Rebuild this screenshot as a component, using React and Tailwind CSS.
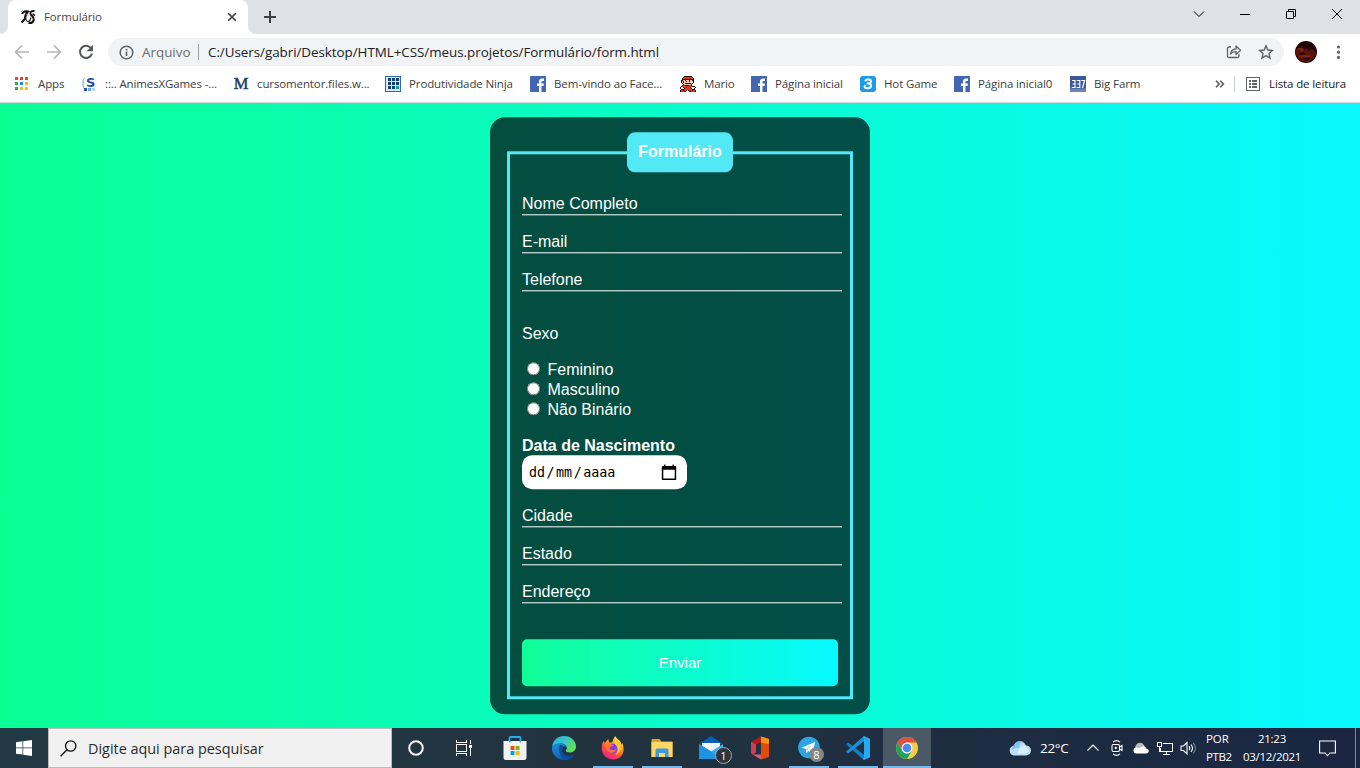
import React from "react";

const bookmarks = [
  { icon: "apps", label: "Apps", width: "w-[27px]" },
  { icon: "s", label: "::.. AnimesXGames -...", width: "w-[112px]" },
  { icon: "m", label: "cursomentor.files.w...", width: "w-[112px]" },
  { icon: "ninja", label: "Produtividade Ninja", width: "w-[105px]" },
  { icon: "fb", label: "Bem-vindo ao Face...", width: "w-[110px]" },
  { icon: "mario", label: "Mario", width: "w-[31px]" },
  { icon: "fb", label: "Página inicial", width: "w-[69px]" },
  { icon: "hot", label: "Hot Game", width: "w-[54px]" },
  { icon: "fb", label: "Página inicial0", width: "w-[76px]" },
  { icon: "farm", label: "Big Farm", width: "w-[50px]" },
];

const marioRows = [
  "....KKKKKKKK....",
  "...KRRRRRRRRK...",
  "..KRRRRRRRRRRK..",
  "..KKKKKKKKKKKK..",
  ".KKPPKPPPKPPKK..",
  ".KPKPPKPPKPPPK..",
  ".KPKPPPPPPPPPK..",
  "..KPPKKKKKKPK...",
  "...KPPPPPPPK....",
  "..KRRKKKKRRK....",
  ".KRRRRRRRRRRKKK.",
  "KWWKRRKRRRKPWWWK",
  "KWWPKRRRRRRKWWK.",
  ".KKKRRRRRRRRKKK.",
  "KRRKRRK.KRRRKRRK",
  "KRRRKK...KKRRRRK",
];
const marioColors = { K: "#1c0d0a", R: "#e33a16", P: "#f4cfb4", W: "#ffffff" };

function BookmarkIcon({ kind }) {
  const cls = "h-4 w-4 shrink-0";
  if (kind === "apps") {
    const c = ["#ea4335", "#ea4335", "#ea4335", "#34a853", "#1a8cf0", "#fbbc04", "#34a853", "#fbbc04", "#fbbc04"];
    return (
      <svg className={cls} viewBox="0 0 16 16" shapeRendering="crispEdges">
        {c.map((f, i) => (
          <rect key={i} x={1 + (i % 3) * 5} y={1 + Math.floor(i / 3) * 5} width="3" height="3" fill={f} />
        ))}
      </svg>
    );
  }
  if (kind === "s")
    return (
      <svg className={cls} viewBox="0 0 16 16">
        <path d="M4 .5C.6 3.5.3 10 3.5 14 2.4 9 2.5 5 4 .5z" fill="#7cc4ee" />
        <text x="5" y="10.7" fontFamily="DejaVu Sans" fontSize="13" fontWeight="bold" fill="#1750b8">S</text>
        <rect x="3" y="12" width="3" height="3" fill="#2456b0" />
        <rect x="7" y="12" width="3" height="3" fill="#6fa6e0" />
        <rect x="11" y="12" width="3" height="3" fill="#b5d3f2" />
      </svg>
    );
  if (kind === "m")
    return (
      <svg className={cls + " overflow-visible"} viewBox="0 0 16 16">
        <text x="0.8" y="13.4" fontFamily="Liberation Serif" fontSize="16.500" fill="#24405f" stroke="#24405f" strokeWidth=".5">M</text>
      </svg>
    );
  if (kind === "ninja")
    return (
      <svg className={cls} viewBox="0 0 16 16" shapeRendering="crispEdges">
        <rect width="16" height="16" fill="#2e64b0" />
        <rect x="1" y="1" width="14" height="14" fill="#dbe8f5" />
        {Array.from({ length: 9 }, (_, i) => (
          <rect key={i} x={3 + (i % 3) * 4} y={2 + Math.floor(i / 3) * 4} width="3" height="3" fill={i === 8 ? "#1595a5" : "#123f74"} />
        ))}
      </svg>
    );
  if (kind === "fb")
    return (
      <svg className={cls} viewBox="0 0 16 16">
        <rect width="16" height="16" rx="0.5" fill="#4267b2" />
        <path d="M9 16V10H7V7.5h2V5.8C9 3.7 10.2 2.6 12.1 2.6c.9 0 1.7.1 1.9.1V5h-1.3c-1 0-1.2.5-1.2 1.2v1.3h2.4L13.6 10h-2.1v6z" fill="#fff" />
      </svg>
    );
  if (kind === "mario")
    return (
      <svg className={cls} viewBox="0 0 16 16" shapeRendering="crispEdges">
        {marioRows.flatMap((row, y) =>
          [...row].map((p, x) => (p === "." ? null : <rect key={x + "-" + y} x={x} y={y} width="1" height="1" fill={marioColors[p]} />))
        )}
      </svg>
    );
  if (kind === "hot")
    return (
      <svg className={cls} viewBox="0 0 16 16">
        <rect width="16" height="16" rx="3" fill="#1b9ce5" />
        <path d="M5.500 4.500C7 3 11 3 11 5.300 11 7 9.500 7.600 7.500 7.600M8 7.600c4.500 0 3.700 4.700-.5 4.700-3 0-3.500-1.600-2.500-2.600" fill="none" stroke="#fff" strokeWidth="2" strokeLinecap="round" />
      </svg>
    );
  return (
    <svg className={cls} viewBox="0 0 16 16">
      <rect width="16" height="16" fill="#3b5998" />
      <rect y="12.500" width="16" height="3.500" fill="#6d84b4" />
      <path d="M2 4.500h3v7H1.800M2.500 8H5M6.800 4.500h3v7H6.600M7.300 8h2.500M11.300 4.500h3.200l-2 7.500" fill="none" stroke="#fff" strokeWidth="1.200" />
    </svg>
  );
}

function TabStrip() {
  return (
    <div className="flex h-[34px] bg-[#dee1e6]">
      <div className="flex w-2 items-end bg-white">
        <div className="h-full w-2 rounded-br-lg bg-[#dee1e6]" />
      </div>
      <div className="bg-[#dee1e6]">
        <div className="flex h-[34px] w-[240px] items-center rounded-t-lg bg-white pl-3">
          <svg className="h-4 w-4" viewBox="0 0 16 16">
            <path d="M2 5C3 2.500 6 1.800 8 2.500 5.500 4.500 5 7.500 4.800 10L1.500 13.500" fill="none" stroke="#111" strokeWidth="2" />
            <path d="M8 3C5 6.500 5 11 7.500 12.500c2 .5 3-2 3.500-4" fill="none" stroke="#222" strokeWidth="1.200" />
            <path d="M14.500 2c-2.500-.5-4.500 1-4 3 .7 2 3.800 3 3.300 5.500S11.500 14.500 8.500 14" fill="none" stroke="#111" strokeWidth="2" />
            <path d="M6.500 5l2 2" stroke="#e99" strokeWidth="1" />
            <path d="M12.500 5l2.500 1.500" stroke="#222" strokeWidth="1.500" />
            <path d="M1 3l2-2" stroke="#8cc3a0" />
          </svg>
          <span className="ml-2 w-[183px] text-[11.5px] tracking-[-0.12px] text-[#45494d]">Formulário</span>
          <svg className="h-2.5 w-2.5" viewBox="0 0 10 10" fill="none" stroke="#3c4043" strokeWidth="1.600">
            <path d="M1.200 1.200l7.600 7.600M8.800 1.200L1.200 8.800" />
          </svg>
        </div>
      </div>
      <div className="w-2 bg-white">
        <div className="h-full w-2 rounded-bl-lg bg-[#dee1e6]" />
      </div>
      <svg className="mt-[11px] ml-2 h-3 w-3" viewBox="0 0 12 12" shapeRendering="crispEdges">
        <path d="M0 5h12v2H0zM5 0h2v12H5z" fill="#3c4043" />
      </svg>
      <div className="ml-auto flex items-start pt-[9px] text-black">
        <svg className="mr-[34px] h-3 w-3" viewBox="0 0 12 12" fill="none" stroke="currentColor" strokeWidth="1">
          <path d="M1 2.500l5 5 5-5" />
        </svg>
        <svg className="mr-[34px] h-3 w-3" viewBox="0 0 12 12" shapeRendering="crispEdges">
          <rect x="1" y="5" width="10" height="1" fill="currentColor" />
        </svg>
        <svg className="mr-[34px] h-3 w-3" viewBox="0 0 12 12" fill="none" stroke="currentColor" strokeWidth="1">
          <path d="M1.500 2.500h7v7h-7zM3.500 2.500v-2h7v7h-2" />
        </svg>
        <svg className="mr-[17px] h-3 w-3" viewBox="0 0 12 12" fill="none" stroke="currentColor" strokeWidth="1">
          <path d="M1 0l10 10M11 0L1 10" />
        </svg>
      </div>
    </div>
  );
}

function Toolbar() {
  return (
    <div className="flex h-8 items-end bg-white">
      <div className="flex h-7 w-[108px] items-center pl-[14px]">
        <svg className="h-4 w-4" viewBox="0 0 16 16" fill="none" stroke="#b4b6b9" strokeWidth="1.700">
          <path d="M15 8H2M8 1.500L1.500 8 8 14.500" />
        </svg>
        <svg className="ml-4 h-4 w-4" viewBox="0 0 16 16" fill="none" stroke="#b4b6b9" strokeWidth="1.700">
          <path d="M1 8h13M8 1.500L14.500 8 8 14.500" />
        </svg>
        <svg className="ml-4 h-4 w-4" viewBox="0 0 16 16">
          <path d="M13.200 4.500A6.100 6.100 0 1 0 14 9.500" fill="none" stroke="#55595e" strokeWidth="2" />
          <path d="M15 .8v6.400H8.600z" fill="#55595e" />
        </svg>
      </div>
      <div className="flex h-7 w-[1176px] items-center rounded-full bg-[#f1f3f4] pl-[11px] text-[13.400px]">
        <svg className="h-[15px] w-[15px]" viewBox="0 0 15 15">
          <circle cx="7.500" cy="7.500" r="6.300" fill="none" stroke="#5f6368" strokeWidth="1.500" />
          <path d="M6.700 6.600h1.600v4.400H6.700zM6.700 4h1.600v1.600H6.700z" fill="#5f6368" />
        </svg>
        <span className="ml-2 w-[48px] whitespace-nowrap text-[#6a6e73]">Arquivo</span>
        <span className="ml-2 h-4 w-px bg-[#9a9da1]" />
        <span className="ml-[9px] whitespace-nowrap tracking-[-0.040px] text-[#202124]">C:/Users/gabri/Desktop/HTML+CSS/meus.projetos/Formulário/form.html</span>
        <svg className="mr-4 ml-auto h-4 w-4" viewBox="0 0 16 16" fill="none" stroke="#5f6368" strokeWidth="1.300">
          <path d="M5 3H3a1.500 1.500 0 0 0-1.500 1.500v7.500A1.500 1.500 0 0 0 3 13.500h8.500A1.500 1.500 0 0 0 13 12v-2" />
          <path d="M4.500 10c.4-3 2-4.800 5.500-5V2l4.500 4.300L10 10.500V7.700C7.500 7.600 6 8.300 4.500 10z" strokeLinejoin="round" />
        </svg>
        <svg className="mr-[10px] h-4 w-4" viewBox="0 0 16 16" fill="none" stroke="#5f6368" strokeWidth="1.400">
          <path d="M8 1.900l1.850 4.150 4.550.45-3.400 3 1 4.500L8 11.650 4 14l1-4.500-3.400-3 4.550-.45z" />
        </svg>
      </div>
      <div className="flex h-7 flex-1 items-center pl-[11px]">
        <svg className="h-[22px] w-[22px]" viewBox="0 0 22 22">
          <circle cx="11" cy="11" r="11" fill="#200605" />
          <path d="M1 8.500C4 5 8 9 11 8s7 1 9 2l1 3c-2 5-6 8-10 8S2 17 1 13z" fill="#5a1409" />
          <path d="M3 8l3-2 3 2-2 3zM3 15l7-1 8 1-4 1H6z" fill="#822210" />
          <path d="M4 12l5-1 2 2-5 1zM13 8l3 1-3 1zM8 17h7l-3 3z" fill="#210605" />
        </svg>
        <svg className="ml-[14px] h-4 w-4" viewBox="0 0 16 16" fill="#5f6368">
          <circle cx="7.500" cy="3" r="1.600" /><circle cx="7.500" cy="8.200" r="1.600" /><circle cx="7.500" cy="13.400" r="1.600" />
        </svg>
      </div>
    </div>
  );
}

function BookmarksBar() {
  return (
    <div className="flex h-[37px] items-center border-b border-[#d5d8dc] bg-white pl-[14px] text-[11.500px] tracking-[-0.120px] text-[#3c4043]">
      <div className="flex items-center gap-4">
        {bookmarks.map((b) => (
          <div key={b.label} className="flex items-center gap-2">
            <BookmarkIcon kind={b.icon} />
            <span className={b.width + " whitespace-nowrap"}>{b.label}</span>
          </div>
        ))}
      </div>
      <div className="ml-auto flex items-center">
        <svg className="h-2 w-2.5" viewBox="0 0 10 8" fill="none" stroke="#55595e" strokeWidth="1.600">
          <path d="M1 .8L4.200 4 1 7.200M5.200 .8L8.400 4 5.200 7.200" />
        </svg>
        <span className="ml-[9px] h-4 w-px bg-[#cdd0d4]" />
        <svg className="ml-[11px] h-[14px] w-[14px]" viewBox="0 0 14 14" shapeRendering="crispEdges" fill="#5f6368">
          <path fillRule="evenodd" d="M0 0h14v14H0zM1 1v12h12V1z" />
          <path d="M3 3h2v2H3zM6 3h5v2H6zM3 6h2v2H3zM6 6h5v2H6zM3 9h2v2H3zM6 9h5v2H6z" />
        </svg>
        <span className="ml-[9px] w-[91px] whitespace-nowrap text-[#202124]">Lista de leitura</span>
      </div>
    </div>
  );
}

function Field({ label, className = "" }) {
  return (
    <div className={"h-[21px] w-[320px] border-b border-white leading-5 " + className}>
      <label className="block">{label}</label>
    </div>
  );
}

function FormPage() {
  return (
    <main className="flex h-[625px] items-center justify-center bg-[linear-gradient(90deg,#0aff95,#08f8ff)] [font-family:'Liberation_Sans',Arial,sans-serif]">
      <form className="h-[597px] w-[380px] translate-y-[0.300px] rounded-[15px] bg-[#02040a]/70 px-[17px] py-[15px] text-[16px] text-white">
        <fieldset className="h-[567px] w-[346px] min-w-0 border-[3px] border-[#52e8f6] px-3">
          <legend className="mx-auto h-10 w-[106px] rounded-lg bg-[#52e8f6] text-center leading-[39px] font-bold">Formulário</legend>
          <Field label="Nome Completo" className="mt-[22px]" />
          <Field label="E-mail" className="mt-[17px]" />
          <Field label="Telefone" className="mt-[17px]" />
          <p className="mt-[33px] h-[18px] leading-5">Sexo</p>
          <div className="mt-[17px]">
            {["Feminino", "Masculino", "Não Binário"].map((s) => (
              <label key={s} className="flex h-5 items-start leading-[22px]">
                <input type="radio" name="sexo" className="mt-[3px] mr-[7.500px] mb-0 ml-[5px] h-[13px] w-[13px]" />
                {s}
              </label>
            ))}
          </div>
          <p className="mt-[17px] h-[18px] leading-5 font-bold">Data de Nascimento</p>
          <div className="mt-px flex h-[34px] w-[165px] items-center rounded-[10px] bg-white pr-[9px] pl-[7px] text-[13.333px] text-black [font-family:'DejaVu_Sans_Mono',monospace]">
            <span className="pt-0.5">dd</span>
            <span className="mx-[1.500px] pt-0.5">/</span>
            <span className="pt-0.5">mm</span>
            <span className="mx-[1.500px] pt-0.5">/</span>
            <span className="pt-0.5">aaaa</span>
            <svg className="ml-auto h-[17px] w-[17px]" viewBox="0 0 17 17">
              <path fillRule="evenodd" d="M2 1.800H3V.300h1.500V1.800h7V.300H13V1.800h1a1.200 1.200 0 0 1 1.200 1.200v11.600a1.200 1.200 0 0 1-1.200 1.200h-12A1.200 1.200 0 0 1 .8 14.600V3A1.200 1.200 0 0 1 2 1.800zM2.300 5.500v8.800h11.400V5.500z" fill="#000" />
            </svg>
          </div>
          <Field label="Cidade" className="mt-[17px]" />
          <Field label="Estado" className="mt-[17px]" />
          <Field label="Endereço" className="mt-[17px]" />
          <button type="button" className="mt-9 block h-[47px] w-[316px] rounded-[5px] bg-[linear-gradient(90deg,#11ff98,#06f9ff)] pt-0.5 text-[15px]">Enviar</button>
        </fieldset>
      </form>
    </main>
  );
}

function StoreIcon() {
  return (
    <svg className="h-6 w-6" viewBox="0 0 24 24">
      <path d="M6.500 6V2.200c0-.7.5-1.200 1.200-1.200h8.600c.7 0 1.200.5 1.200 1.200V6" fill="none" stroke="#27aee8" strokeWidth="1.800" />
      <path d="M.5 5h23v16.500A2.500 2.500 0 0 1 21 24H3a2.500 2.500 0 0 1-2.500-2.500z" fill="#f2f2f2" />
      <path d="M6 5h1.500v1.500H6zM16.500 5H18v1.500h-1.500z" fill="#27aee8" />
      <path d="M7.500 10h4v4h-4z" fill="#f25022" /><path d="M12.500 10h4v4h-4z" fill="#7fba00" />
      <path d="M7.500 15h4v4h-4z" fill="#00a4ef" /><path d="M12.500 15h4v4h-4z" fill="#ffb900" />
    </svg>
  );
}

function EdgeIcon() {
  return (
    <svg className="h-6 w-6" viewBox="0 0 24 24">
      <defs>
        <linearGradient id="edgeTop" x1="0" y1="0" x2="1" y2=".5"><stop offset="0" stopColor="#2aa9e4" /><stop offset=".5" stopColor="#31c5cf" /><stop offset="1" stopColor="#66dd57" /></linearGradient>
        <linearGradient id="edgeLow" x1="0" y1="0" x2=".6" y2="1"><stop offset="0" stopColor="#1b8fdf" /><stop offset="1" stopColor="#1059a9" /></linearGradient>
      </defs>
      <path d="M0 11C.8 4.500 5.500 0 12 0c7 0 12 5 12 10.500 0 3.500-2.500 6-6 6-2.500 0-4.200-.8-4.200-1.700 0-.6 1-1 1-2.800C14.800 9.500 12 7.500 8.500 7.500 5 7.500 2 9 0 11z" fill="url(#edgeTop)" />
      <path d="M0 12C1 8.500 5 7.400 8.500 7.500c3 0 5.300 1.500 6 3.500-1-.8-5.500-1-6 3-.5 5 4 8.500 8.500 7 2-.5 4-1.800 5-2.500C20 22.500 16 24 12 24 5 24-.2 18 0 12z" fill="url(#edgeLow)" />
      <path d="M8.500 8.500C6 12 6.500 20 13 23.900 18 24 21 21 22.500 18.200 17 21.500 10.500 19.500 10.300 14c0-1.500.7-2.800 1.700-3.500z" fill="#0d4f9c" />
    </svg>
  );
}

function FirefoxIcon() {
  return (
    <svg className="h-6 w-6" viewBox="0 0 24 24">
      <defs>
        <linearGradient id="fox" x1=".8" y1="0" x2=".25" y2="1"><stop offset="0" stopColor="#fff44f" /><stop offset=".35" stopColor="#ffa71e" /><stop offset=".65" stopColor="#ff4a3d" /><stop offset="1" stopColor="#e8209a" /></linearGradient>
      </defs>
      <path d="M2.500 5c.5 1 .8 1.300 1.500 1.800C5 6 5.500 4 7.500 3.200L8 6.500h3c1-1.500 1-4 3.500-6.500.5 3 5.500 4 6 8.500l.8-1.500C24.500 14 22 23.500 12.500 23.500 5 23.500.8 18 .8 12.500.8 9.500 1.200 7 2.500 5z" fill="url(#fox)" />
      <circle cx="12" cy="12.500" r="5" fill="#8a3be0" />
      <path d="M3.500 8.500c3-2 6.500-1 9 .8-1.500 1.200-3.500 1-4 3 .8 2.500 5 2.500 6.500.5-.3 5-7.500 5-9.500 1-1-1.800-.8-4-2-5.300z" fill="#ff7139" />
      <path d="M14 2c0 4 6 5 5.500 11-.3 3-2 5-5 6 2.500-3 2.800-7 .5-9.500C13 7 12 5 14 2z" fill="#ffc838" />
    </svg>
  );
}

function FolderIcon() {
  return (
    <svg className="h-6 w-6" viewBox="0 0 24 24">
      <path d="M1.500 3h8l2 2.500h11V21h-21z" fill="#e2a419" />
      <path d="M1.500 6h21v15h-21z" fill="#ffd768" />
      <path d="M5.500 21v-7A1.500 1.500 0 0 1 7 12.500h10a1.500 1.500 0 0 1 1.500 1.500v7H15v-4H9v4z" fill="#3f97dc" />
    </svg>
  );
}

function Badge({ children, className }) {
  return <span className={"absolute flex items-center justify-center rounded-full text-[11px] leading-none text-white " + className}>{children}</span>;
}

function MailIcon() {
  return (
    <span className="relative flex">
      <svg className="h-6 w-6" viewBox="0 0 24 24">
        <path d="M0 8l12-8 12 8z" fill="#0a60b8" />
        <path d="M3 7h18v12H3z" fill="#f3f6f9" />
        <path d="M0 8l13 8-13 7z" fill="#1683d8" /><path d="M24 8v15H0l12-7.500z" fill="#2bb3f0" /><path d="M0 8l12 7.500L24 23H0z" fill="#1f93e2" />
      </svg>
      <Badge className="-right-[9px] -bottom-[4px] h-[17px] w-[17px] border border-[#a5aaae] bg-[#2d343a]">1</Badge>
    </span>
  );
}

function OfficeIcon() {
  return (
    <svg className="h-6 w-6" viewBox="0 0 24 24">
      <path d="M3 6l10-5.500v6L8 8.500v8L4.500 18.500 3 17z" fill="#b01d18" />
      <path d="M3 6l5 2.500v8L4.500 18.500 3 17z" fill="#d43b55" />
      <path d="M13 .5L21 3v18l-8 2.500z" fill="#e24a0c" /><path d="M13 .5L21 3v5l-8-1.500z" fill="#f6930e" />
      <path d="M4.500 18.500H13v5z" fill="#dc6070" />
    </svg>
  );
}

function TelegramIcon() {
  return (
    <span className="relative flex">
      <svg className="h-6 w-6" viewBox="0 0 24 24">
        <circle cx="12" cy="11.500" r="10.800" fill="#2ca5e0" />
        <path d="M4.500 11.700L18 6l-2.500 12-4-3-2 2-.8-4.300z" fill="#fff" /><path d="M9 12.700l6.500-4.200-4.500 5-.8 2.600z" fill="#b9d6e8" />
      </svg>
      <Badge className="-right-[3px] -bottom-[2px] h-[15px] w-[15px] bg-[#858585]">8</Badge>
    </span>
  );
}

function CodeIcon() {
  return (
    <svg className="h-6 w-6" viewBox="0 0 24 24">
      <path d="M0 8.300L2 6.500l16 12.300V24z" fill="#1180c9" /><path d="M0 15.700l2 1.800L18 5.200V0z" fill="#1691dc" />
      <path d="M18 0l6 2.800v18.400L18 24l-1.500-1 1.500-1V2l-1.500-1z" fill="#28a8ef" />
    </svg>
  );
}

function ChromeIcon() {
  return (
    <svg className="h-6 w-6" viewBox="0 0 24 24">
      <circle cx="12" cy="12" r="11" fill="#f7cb45" />
      <path d="M2.500 6.500A11 11 0 0 1 21.500 6.500H12L7.200 14.750z" fill="#dd5144" />
      <path d="M2.500 6.500A11 11 0 0 0 12 23l4.760-8.250H7.200z" fill="#1da462" />
      <circle cx="12" cy="12" r="5.500" fill="#fff" /><circle cx="12" cy="12" r="4.300" fill="#4a8af4" />
    </svg>
  );
}

const apps = [
  { id: "store", Icon: StoreIcon },
  { id: "edge", Icon: EdgeIcon },
  { id: "firefox", Icon: FirefoxIcon, open: true },
  { id: "folder", Icon: FolderIcon, open: true },
  { id: "mail", Icon: MailIcon },
  { id: "office", Icon: OfficeIcon },
  { id: "telegram", Icon: TelegramIcon, open: true },
  { id: "code", Icon: CodeIcon, open: true },
  { id: "chrome", Icon: ChromeIcon, active: true },
];

function Taskbar() {
  return (
    <footer className="flex h-10 bg-gradient-to-r from-[#213a43] via-[#21323f] to-[#1a2642] text-white">
      <div className="flex w-12 items-center justify-center">
        <svg className="h-4 w-4" viewBox="0 0 16 16" fill="#fff">
          <path d="M0 2.200l6.500-.9v6.200H0zM7.200 1.200L16 0v7.500H7.200zM0 8.300h6.500v6.200L0 13.700zM7.200 8.300H16V16l-8.800-1.200z" />
        </svg>
      </div>
      <div className="flex w-[344px] items-center border border-[#bcbcbc] bg-[#f0f0f0] pl-[11px]">
        <svg className="h-[17px] w-[17px]" viewBox="0 0 17 17" fill="none" stroke="#111" strokeWidth="1.300">
          <circle cx="10.700" cy="6" r="5.200" /><path d="M7 9.800L.6 16.200" />
        </svg>
        <span className="ml-[11px] pt-px text-[14.400px] tracking-[0px] text-[#2b2b2b]">Digite aqui para pesquisar</span>
      </div>
      <div className="flex w-12 items-center justify-center">
        <svg className="h-4 w-4" viewBox="0 0 16 16"><circle cx="8" cy="8" r="6.800" fill="none" stroke="#f4f4f4" strokeWidth="2" /></svg>
      </div>
      <div className="mr-[3px] flex w-12 items-center justify-center">
        <svg className="h-4 w-4" viewBox="0 0 16 16" fill="none" stroke="#fff" strokeWidth="1" shapeRendering="crispEdges">
          <path d="M.5 0v2.500h10V0M.5 16v-2.500h10V16M.5 4.500h10v7H.5zM14.500 0v4M14.500 8v8" /><path d="M13 4.500h3v3h-3z" fill="#fff" stroke="none" />
        </svg>
      </div>
      <div className="flex gap-px">
        {apps.map(({ id, Icon, open, active }) => (
          <div key={id} className={"flex w-12 flex-col items-center " + (active ? "bg-[#4b5966]" : "")}>
            <div className="flex h-[38px] items-center pt-0.5"><Icon /></div>
            <div className={"h-0.5 " + (active ? "w-12 bg-[#76b9ed]" : open ? "w-10 bg-[#76b9ed]" : "w-10")} />
          </div>
        ))}
      </div>
      <div className="ml-auto flex items-center">
        <svg className="h-[16px] w-[22px]" viewBox="0 0 22 16">
          <path d="M5 15.500a5 5 0 0 1-.5-9.800A6.800 6.800 0 0 1 17 5.500a5 5 0 0 1 0 10z" fill="#b9e0f8" />
          <path d="M5 6a6.500 6.500 0 0 1 9-4.500C11 3 10 6 10.500 8.500 8 7 5.500 8 4 10 2.500 9 3 7 5 6z" fill="#7fc3f0" />
          <path d="M10 9c2-4 7-4 8-1 2 1 2 5-1 5.500H8z" fill="#d9effb" />
        </svg>
        <span className="ml-[9px] w-[30px] pt-px text-[13.500px] tracking-[-0.300px] whitespace-nowrap">22°C</span>
        <svg className="ml-[17px] h-3 w-3" viewBox="0 0 12 12" fill="none" stroke="#fff" strokeWidth="1.200"><path d="M.5 8.500L6 3l5.500 5.500" /></svg>
        <svg className="ml-[12px] h-4 w-3" viewBox="0 0 12 16" fill="none" stroke="#fff" strokeWidth="1.100">
          <rect x="1" y="4.500" width="7.500" height="7" rx="1.500" /><path d="M8.500 7l2.500-1.500v5L8.500 9M2 2.200C4 .4 7 .4 9 2.200M2 13.800c2 1.800 5 1.800 7 0" /><circle cx="4.800" cy="8" r=".6" />
        </svg>
        <svg className="ml-[10px] h-3 w-4" viewBox="0 0 16 12">
          <path d="M2.500 7A4.700 4.700 0 0 1 11.500 4l2 2z" fill="#b9b9b9" /><path d="M3.500 11.500a3 3 0 0 1 0-6c1-.2 2 0 3 .8C8 4 12 4 12.700 6.500c4-.2 4 5 .3 5z" fill="#fff" />
        </svg>
        <svg className="ml-2 h-[14px] w-4" viewBox="0 0 16 14" fill="none" stroke="#fff" strokeWidth="1" shapeRendering="crispEdges">
          <path d="M6 2.500h9.500v8H3.500v-4M9.500 10.500v3M6 13.500h7M.5 1.500h4v4h-4zM2.500 5.500v5" />
        </svg>
        <svg className="ml-[7px] h-[14px] w-[17px]" viewBox="0 0 17 14" fill="none" stroke="#fff" strokeWidth="1.100">
          <path d="M1 5v4.500h2.500L7 13V1.500L3.500 5zM9 5.200q1.500 2 0 4M11 3.500q3 3.700 0 7.300" /><path d="M13.200 1.800q4.500 5.500 0 10.700" stroke="#7b8494" />
        </svg>
        <div className="ml-[9px] flex w-7 flex-col text-[11.500px] leading-[18px] tracking-[-0.400px]"><span className="tracking-[-0.100px]">POR</span><span>PTB2</span></div>
        <div className="ml-[9px] flex w-[58px] flex-col items-center text-[11.500px] leading-[18px] tracking-[-0.280px]"><span>21:23</span><span>03/12/2021</span></div>
        <svg className="ml-[18px] h-[17px] w-[17px]" viewBox="0 0 17 17" fill="none" stroke="#fff" strokeWidth="1.100">
          <path d="M.6 1h15.800v12H11l-2.500 2.700L6 13H.6z" />
        </svg>
        <span className="mr-1 ml-[19px] h-10 w-px bg-[#7c8494]" />
      </div>
    </footer>
  );
}

export default function App() {
  return (
    <div className="flex h-[768px] w-[1360px] flex-col overflow-hidden [font-family:'Open_Sans','Noto_Sans',sans-serif]">
      <TabStrip />
      <Toolbar />
      <BookmarksBar />
      <FormPage />
      <Taskbar />
    </div>
  );
}
